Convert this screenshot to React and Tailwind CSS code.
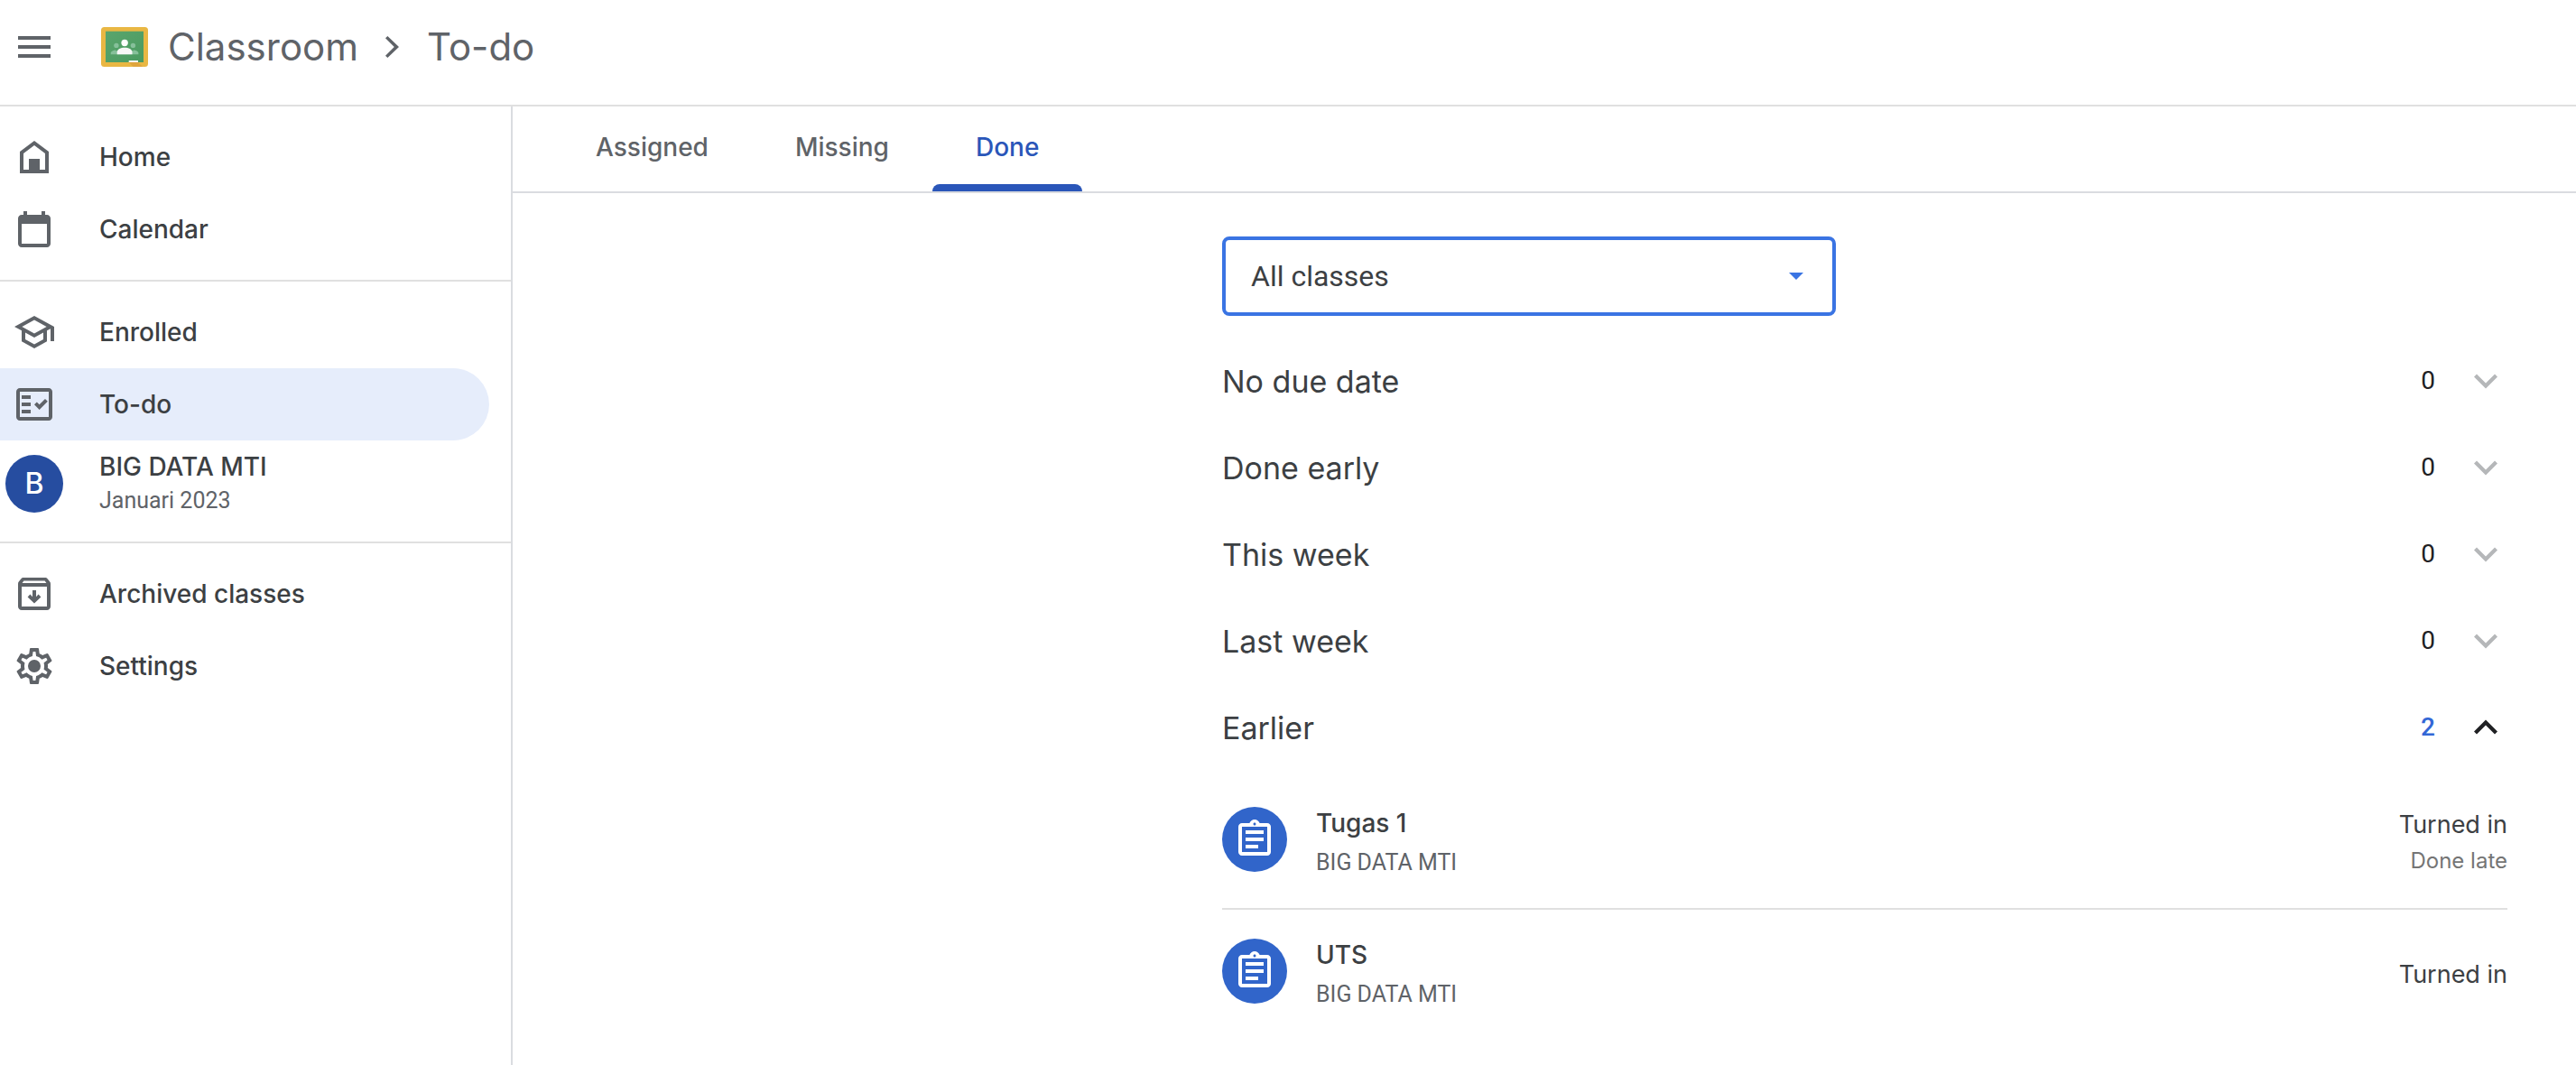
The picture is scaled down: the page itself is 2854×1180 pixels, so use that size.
import { useState } from "react";

const PATHS = {
  menu: "M3 18h18v-2H3v2zm0-5h18v-2H3v2zm0-7v2h18V6H3z",
  home: "M12 3L4 9v12h16V9zM18 19h-3v-6H9v6H6v-9l6-4.5 6 4.5z",
  calendar:
    "M19 4h-1V2h-2v2H8V2H6v2H5c-1.1 0-2 .9-2 2v14c0 1.1.9 2 2 2h14c1.1 0 2-.9 2-2V6c0-1.1-.9-2-2-2zm0 16H5V9h14v11z",
  school:
    "M12 3L1 9l4 2.18v6L12 21l7-3.82v-6l2-1.09V17h2V9L12 3zm6.82 6L12 12.72 5.18 9 12 5.28 18.82 9zM17 15.99l-5 2.73-5-2.73v-3.72L12 15l5-2.73v3.72z",
  todo:
    "M20 3H4c-1.1 0-2 .9-2 2v14c0 1.1.9 2 2 2h16c1.1 0 2-.9 2-2V5c0-1.1-.9-2-2-2zm0 16H4V5h16v14zM5 7h5v2H5zM5 11h5v2H5zM5 15h5v2H5zM19.41 10.42L17.99 9l-3.17 3.17-1.41-1.42L12 12.16 14.82 15z",
  archive:
    "M20.6 5.3l-1.3-1.7C19 3.2 18.5 3 18 3H6c-.5 0-1 .2-1.3.6L3.4 5.3C3.1 5.6 3 6 3 6.5V19c0 1.1.9 2 2 2h14c1.1 0 2-.9 2-2V6.5c0-.5-.1-.9-.4-1.2zM6.2 4.8h11.6l.9 1.2H5.3zM5 19V8h14v11zM13 10h-2v3.6l-1.3-1.3-1.4 1.4L12 17.3l3.7-3.6-1.4-1.4-1.3 1.3z",
  settings:
    "M19.43 12.98c.04-.32.07-.64.07-.98 0-.34-.03-.66-.07-.98l2.11-1.65c.19-.15.24-.42.12-.64l-2-3.46c-.09-.16-.26-.25-.44-.25-.06 0-.12.01-.17.03l-2.49 1c-.52-.4-1.08-.73-1.69-.98l-.38-2.65C14.46 2.18 14.25 2 14 2h-4c-.25 0-.46.18-.49.42l-.38 2.65c-.61.25-1.17.59-1.69.98l-2.49-1c-.06-.02-.12-.03-.18-.03-.17 0-.34.09-.43.25l-2 3.46c-.13.22-.07.49.12.64l2.11 1.65c-.04.32-.07.65-.07.98 0 .33.03.66.07.98l-2.11 1.65c-.19.15-.24.42-.12.64l2 3.46c.09.16.26.25.44.25.06 0 .12-.01.17-.03l2.49-1c.52.4 1.08.73 1.69.98l.38 2.65c.03.24.24.42.49.42h4c.25 0 .46-.18.49-.42l.38-2.65c.61-.25 1.17-.59 1.69-.98l2.49 1c.06.02.12.03.18.03.17 0 .34-.09.43-.25l2-3.46c.12-.22.07-.49-.12-.64l-2.11-1.65zm-1.98-1.71c.04.31.05.52.05.73 0 .21-.02.43-.05.73l-.14 1.13.89.7 1.08.84-.7 1.21-1.27-.51-1.04-.42-.9.68c-.43.32-.84.56-1.25.73l-1.06.43-.16 1.13-.2 1.35h-1.4l-.19-1.35-.16-1.13-1.06-.43c-.43-.18-.83-.41-1.23-.71l-.91-.7-1.06.43-1.27.51-.7-1.21 1.08-.84.89-.7-.14-1.13c-.03-.31-.05-.54-.05-.74s.02-.43.05-.73l.14-1.13-.89-.7-1.08-.84.7-1.21 1.27.51 1.04.42.9-.68c.43-.32.84-.56 1.25-.73l1.06-.43.16-1.13.2-1.35h1.39l.19 1.35.16 1.13 1.06.43c.43.18.83.41 1.23.71l.91.7 1.06-.43 1.27-.51.7 1.21-1.07.85-.89.7.14 1.13zM12 8.5a3.5 3.5 0 1 0 0 7 3.5 3.5 0 1 0 0-7z",
  assignment:
    "M7 15h7v2H7zM7 11h10v2H7zM7 7h10v2H7zM19 3h-4.18C14.4 1.84 13.3 1 12 1c-1.3 0-2.4.84-2.82 2H5c-1.1 0-2 .9-2 2v14c0 1.1.9 2 2 2h14c1.1 0 2-.9 2-2V5c0-1.1-.9-2-2-2zm-7-.25c.41 0 .75.34.75.75s-.34.75-.75.75-.75-.34-.75-.75.34-.75.75-.75zM19 19H5V5h14v14z",
  down: "M12 16.3L5.5 9.7 7 8.2l5 5 5-5 1.5 1.5z",
  up: "M12 7.7l6.5 6.5-1.5 1.5-5-5-5 5-1.5-1.5z",
  crumb: "M9.2 6L8 7.1l4.9 4.9L8 16.9 9.2 18l6.3-6z",
};

function Icon({ name, className }) {
  return (
    <svg viewBox="0 0 24 24" fill="currentColor" fillRule="evenodd" aria-hidden="true" className={"size-12 shrink-0 " + (className || "")}>
      <path d={PATHS[name]} />
    </svg>
  );
}

function Logo() {
  return (
    <svg viewBox="0 0 52 44" aria-hidden="true" className="h-11 w-[52px] shrink-0">
      <defs>
        <linearGradient id="board" x1="0" y1="0" x2="1" y2="1">
          <stop offset="0" stopColor="#5aa56d" />
          <stop offset="1" stopColor="#4a9a60" />
        </linearGradient>
      </defs>
      <rect width="52" height="44" rx="3.5" fill="#e9b743" />
      <rect x="5" y="4.7" width="42" height="34.3" fill="url(#board)" />
      <g fill="#86c09a">
        <circle cx="16.9" cy="20.4" r="2.7" />
        <circle cx="35.4" cy="20.4" r="2.7" />
        <path d="M10.7 30.3v-1.4c0-2 3-3.3 6.2-3.3h18.5c3.2 0 6 1.300 6 3.3v1.4z" />
      </g>
      <path d="M16 24h20v2.2H16z" fill="#52a068" />
      <circle cx="26.1" cy="17.5" r="3.7" fill="#fff" />
      <path d="M17.7 30.3v-2.5c0-3.3 4.2-5.1 8.4-5.1s8.4 1.8 8.4 5.1v2.5z" fill="#f7f7f7" />
      <path d="M30.7 39H41l5 5H35.7z" fill="#e0a53d" />
      <rect x="30.7" y="37" width="10.3" height="2" fill="#f4f4f4" />
    </svg>
  );
}

function NavItem({ icon, label, active }) {
  return (
    <a
      href="#"
      aria-current={active ? "page" : undefined}
      className={
        "mr-6 flex h-20 items-center gap-12 rounded-r-full pl-[14px] text-[28px] font-medium text-[#3c4043] " +
        (active ? "bg-[#e6edfb]" : "hover:bg-gray-100")
      }
    >
      <Icon name={icon} className="text-[#5f6368]" />
      <span>{label}</span>
    </a>
  );
}

const TABS = ["Assigned", "Missing", "Done"];
const SECTIONS = [
  { title: "No due date", count: 0 },
  { title: "Done early", count: 0 },
  { title: "This week", count: 0 },
  { title: "Last week", count: 0 },
  { title: "Earlier", count: 2 },
];
const WORK = [
  { title: "Tugas 1", course: "BIG DATA MTI", status: "Turned in", note: "Done late" },
  { title: "UTS", course: "BIG DATA MTI", status: "Turned in" },
];

function Section({ title, count }) {
  const [open, setOpen] = useState(count > 0);
  return (
    <section>
      <h2>
        <button
          type="button"
          disabled={count === 0}
          aria-expanded={open}
          onClick={() => setOpen(!open)}
          className="flex h-24 w-full items-center text-left"
        >
          <span className="flex-1 text-[34px] text-[#3c4043]">{title}</span>
          <span
            className={
              "mr-8 font-[Roboto,sans-serif] text-[28px] " + (count ? "font-medium text-[#3367d6]" : "text-[#202124]")
            }
          >
            {count}
          </span>
          <Icon name={open ? "up" : "down"} className={count ? "text-[#202124]" : "text-[#b5b7b9]"} />
        </button>
      </h2>
      {open && (
        <ul className="mt-2 divide-y-2 divide-[#e0e0e0]">
          {WORK.map((w) => (
            <li key={w.title}>
              <a href="#" className="flex h-36 items-center">
                <span className="mb-2 flex size-[72px] items-center justify-center rounded-full bg-[#3165ca] text-white">
                  <Icon name="assignment" />
                </span>
                <span className="ml-8 flex flex-1 flex-col">
                  <span className="text-[28px] leading-11 font-medium text-[#3c4043]">{w.title}</span>
                  <span className="font-[Roboto,sans-serif] text-[25px] leading-11 text-[#5f6368]">{w.course}</span>
                </span>
                <span className="flex flex-col text-right">
                  <span className="text-[27px] leading-10 text-[#3c4043]">{w.status}</span>
                  {w.note && <span className="text-[24px] leading-10 text-[#757575]">{w.note}</span>}
                </span>
              </a>
            </li>
          ))}
        </ul>
      )}
    </section>
  );
}

export default function App() {
  const [tab, setTab] = useState("Done");
  return (
    <div className="flex min-h-screen flex-col bg-white font-[Inter,sans-serif]">
      <header className="flex items-center border-b-2 border-[#e0e0e0] pt-7 pb-10 pl-[14px] text-[42px] leading-12 text-[#5f6368]">
        <button type="button" aria-label="Main menu">
          <Icon name="menu" />
        </button>
        <a href="#" className="ml-[50px] flex items-center gap-[22px]">
          <Logo />
          <span>Classroom</span>
        </a>
        <Icon name="crumb" className="mx-[14px]" />
        <h1>To-do</h1>
      </header>

      <div className="flex flex-1">
        <nav aria-label="Main" className="w-[568px] shrink-0 border-r-2 border-[#dadce0]">
          <div className="border-b-2 border-[#e0e0e0] py-4">
            <NavItem icon="home" label="Home" />
            <NavItem icon="calendar" label="Calendar" />
          </div>
          <div className="border-b-2 border-[#e0e0e0] py-4">
            <NavItem icon="school" label="Enrolled" />
            <NavItem icon="todo" label="To-do" active />
            <a href="#" className="mr-6 flex h-24 items-center gap-10 rounded-r-full pl-[6px]">
              <span className="flex size-16 items-center justify-center rounded-full bg-[#264da0] text-[32px] font-medium text-white">
                B
              </span>
              <span className="flex flex-col">
                <span className="text-[28px] leading-[38px] font-medium text-[#3c4043]">BIG DATA MTI</span>
                <span className="font-[Roboto,sans-serif] text-[25px] leading-[38px] text-[#5f6368]">Januari 2023</span>
              </span>
            </a>
          </div>
          <div className="py-4">
            <NavItem icon="archive" label="Archived classes" />
            <NavItem icon="settings" label="Settings" />
          </div>
        </nav>

        <main className="min-w-0 flex-1">
          <div role="tablist" aria-label="Work status" className="flex h-24 border-b-2 border-[#dadce0] pl-11 text-[28px] font-medium">
            {TABS.map((t) => (
              <button
                key={t}
                type="button"
                role="tab"
                aria-selected={t === tab}
                onClick={() => setTab(t)}
                className={"relative px-12 pb-1 " + (t === tab ? "text-[#2a56b9]" : "text-[#5f6368]")}
              >
                {t}
                {t === tab && <span className="absolute inset-x-0 bottom-0 h-2 rounded-t-lg bg-[#2a56b9]" />}
              </button>
            ))}
          </div>

          <div className="pr-[76px] pl-12">
            <div className="ml-auto max-w-[1424px] pt-12">
              <div className="relative mb-6 max-w-[680px]">
                <select
                  aria-label="Class filter"
                  className="block h-22 w-full appearance-none rounded-lg border-4 border-[#3a74e3] bg-white px-7 font-[Roboto,sans-serif] text-[32px] text-[#3c4043] outline-none"
                >
                  <option>All classes</option>
                  <option>BIG DATA MTI</option>
                </select>
                <svg viewBox="0 0 16 8" aria-hidden="true" className="pointer-events-none absolute top-10 right-9 h-2 w-4 text-[#3a74e3]">
                  <path d="M0 0h16L8 8z" fill="currentColor" />
                </svg>
              </div>
              {SECTIONS.map((s) => (
                <Section key={s.title} {...s} />
              ))}
            </div>
          </div>
        </main>
      </div>
    </div>
  );
}
